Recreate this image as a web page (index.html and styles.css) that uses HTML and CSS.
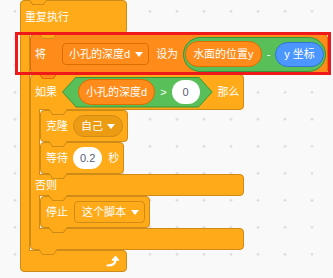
FILE: index.html
```html
<!DOCTYPE html>
<html lang="zh">
<head>
    <meta charset="UTF-8">
    <meta name="viewport" content="width=device-width, initial-scale=1.0">
    <title>重复执行</title>
    <link rel="stylesheet" href="styles.css">
</head>
<body>
<!-- Script -->
    <div class="script">
        <div class="c-block control forever">
            <div class="c-arm top tab">
                <span class="label">重复执行</span>
            </div>
            <div class="c-row">
                <div class="c-side"></div>
                <div class="c-mouth">
                    <!-- set variable -->
                    <div class="block data set tab">
                        <span class="label">将</span>
                        <span class="dropdown">
                            <span class="label">小孔的深度d</span>
                            <span class="arrow"></span>
                        </span>
                        <span class="label to">设为</span>
                        <span class="reporter operator">
                            <span class="reporter var">水面的位置y</span>
                            <span class="label minus">-</span>
                            <span class="reporter motion">y 坐标</span>
                        </span>
                    </div>

                    <!-- if / else -->
                    <div class="c-block control if-else">
                        <div class="c-arm top tab">
                            <span class="label">如果</span>
                            <span class="hex">
                                <span class="hex-in">
                                    <span class="reporter var">小孔的深度d</span>
                                    <span class="label gt">&gt;</span>
                                    <span class="number">0</span>
                                </span>
                            </span>
                            <span class="label then">那么</span>
                        </div>
                        <div class="c-row">
                            <div class="c-side"></div>
                            <div class="c-mouth">
                                <div class="block control clone tab">
                                    <span class="label">克隆</span>
                                    <span class="menu">
                                        <span class="label">自己</span>
                                        <span class="arrow"></span>
                                    </span>
                                </div>
                                <div class="block control wait tab">
                                    <span class="label">等待</span>
                                    <span class="number">0.2</span>
                                    <span class="label sec">秒</span>
                                </div>
                            </div>
                        </div>
                        <div class="c-arm mid tab">
                            <span class="label">否则</span>
                        </div>
                        <div class="c-row">
                            <div class="c-side"></div>
                            <div class="c-mouth">
                                <div class="block control stop tab">
                                    <span class="label">停止</span>
                                    <span class="dropdown">
                                        <span class="label">这个脚本</span>
                                        <span class="arrow"></span>
                                    </span>
                                </div>
                            </div>
                        </div>
                        <div class="c-arm bottom tab-outer"></div>
                    </div>
                </div>
            </div>
            <div class="c-arm bottom loop">
                <svg class="loop-icon" width="15" height="12" viewBox="0 0 15 12">
                    <path d="M1.5 10.5 C6 10.5 9.5 9.5 9.5 4.5" fill="none" stroke="#fff" stroke-width="2.2" stroke-linecap="round"/>
                    <path d="M6 5.2 L9.5 1 L13 5.2 Z" fill="#fff" stroke="#fff" stroke-width="1" stroke-linejoin="round"/>
                </svg>
            </div>
        </div>
    </div>

    <div class="highlight"></div>
</body>
</html>
```

FILE: styles.css
```css
        /* Page */
        * {
            box-sizing: border-box;
        }
        body {
            margin: 0;
            height: 278px;
            overflow: hidden;
            position: relative;
            font-family: "Liberation Sans", "Noto Sans CJK SC", sans-serif;
            font-size: 11px;
            color: #fff;
            background-color: #f9f9f9;
            background-image: radial-gradient(circle, #d8d8d8 1px, transparent 1.4px);
            background-size: 27px 27px;
            background-position: 1.5px -2.2px;
        }

        /* Colours per category */
        .control {
            --fill: #ffab19;
            --edge: #cf8b17;
        }
        .data {
            --fill: #ff8c1a;
            --edge: #db6e00;
        }

        .label {
            line-height: 1;
            white-space: nowrap;
        }

        /* Script and the notch above it */
        .script {
            position: relative;
            margin-left: 20px;
            width: fit-content;
            --fill: #ffab19;
            --edge: #cf8b17;
        }
        .script::before,
        .script::after,
        .tab::before,
        .tab::after,
        .tab-outer::before,
        .tab-outer::after {
            content: '';
            position: absolute;
            z-index: 3;
            clip-path: polygon(0 0, 100% 0, 78% 100%, 22% 100%);
        }
        .script::before {
            left: 8px;
            top: -1px;
            width: 20px;
            height: 6px;
            background: var(--edge);
        }
        .script::after {
            left: 9px;
            top: -1px;
            width: 18px;
            height: 5px;
            background: var(--fill);
        }

        /* Tab under a block */
        .tab::before,
        .tab-outer::before {
            left: var(--tx, 7px);
            top: 100%;
            width: 20px;
            height: 6px;
            background: var(--edge);
        }
        .tab::after,
        .tab-outer::after {
            left: calc(var(--tx, 7px) + 1px);
            top: 100%;
            width: 18px;
            height: 5px;
            background: var(--fill);
        }
        .c-arm.top,
        .c-arm.mid {
            --tx: 17px;
        }

        /* C blocks */
        .c-block {
            display: flex;
            flex-direction: column;
            align-items: flex-start;
        }
        .c-arm {
            position: relative;
            display: flex;
            align-items: center;
            background: var(--fill);
            border: 1px solid var(--edge);
            padding-left: 4px;
        }
        .c-arm.top {
            border-radius: 4px 4px 4px 0;
        }
        .c-arm.mid {
            height: 22px;
            border-radius: 0 4px 4px 0;
        }
        .c-arm.bottom {
            height: 22px;
            border-radius: 0 4px 4px 4px;
        }
        .c-row {
            display: flex;
        }
        .c-side {
            position: relative;
            z-index: 1;
            width: 10px;
            flex-shrink: 0;
            margin: -1px 0;
            background: var(--fill);
            border-left: 1px solid var(--edge);
            border-right: 1px solid var(--edge);
        }
        .c-mouth {
            display: flex;
            flex-direction: column;
            align-items: flex-start;
        }

        .forever .c-arm {
            width: 107px;
        }
        .forever > .c-arm.top {
            height: 34px;
        }
        .loop {
            justify-content: flex-end;
            padding-right: 5px;
        }
        .if-else .c-arm {
            width: 214px;
        }
        .if-else > .c-arm.top {
            height: 36px;
        }

        /* Stack blocks */
        .block {
            position: relative;
            display: flex;
            align-items: center;
            height: 32px;
            padding: 0 4px 0 5px;
            background: var(--fill);
            border: 1px solid var(--edge);
            border-radius: 4px;
        }
        .set {
            height: 40px;
            padding: 0 1px 0 4px;
        }

        /* Fields */
        .dropdown {
            display: flex;
            align-items: center;
            gap: 5px;
            height: 22px;
            padding: 0 5px 0 7px;
            background: var(--fill);
            border: 1px solid var(--edge);
            border-radius: 4px;
        }
        .set .dropdown {
            margin-left: 16px;
            padding-left: 6px;
        }
        .stop .dropdown {
            margin-left: 6px;
        }
        .menu {
            display: flex;
            align-items: center;
            gap: 4px;
            height: 22px;
            margin-left: 5px;
            padding: 0 7px;
            background: #ec9c13;
            border: 1px solid var(--edge);
            border-radius: 11px;
        }
        .arrow {
            width: 0;
            height: 0;
            border-left: 4px solid transparent;
            border-right: 4px solid transparent;
            border-top: 5px solid #fff;
        }
        .number {
            display: flex;
            align-items: center;
            justify-content: center;
            height: 22px;
            padding: 0 7px;
            margin-left: 5px;
            color: #575e75;
            background: #fff;
            border-radius: 11px;
            line-height: 1;
        }
        .sec {
            margin-left: 6px;
        }
        .to {
            margin-left: 7px;
        }

        /* Reporters */
        .reporter {
            display: flex;
            align-items: center;
            white-space: nowrap;
            line-height: 1;
            border: 1px solid;
        }
        .operator {
            height: 35px;
            margin-left: 5px;
            padding: 0 1px;
            background: #59c059;
            border-color: #389438;
            border-radius: 18px;
        }
        .var {
            height: 26px;
            padding: 0 7px;
            background: #ff8c1a;
            border-color: #db6e00;
            border-radius: 13px;
        }
        .motion {
            height: 25px;
            padding: 0 8px;
            background: #4c97ff;
            border-color: #3373cc;
            border-radius: 13px;
        }
        .minus {
            margin: 0 5px;
        }

        /* Boolean */
        .hex {
            display: flex;
            height: 31px;
            margin-left: 5px;
            padding: 1px;
            background: #389438;
            clip-path: polygon(14px 0, calc(100% - 14px) 0, 100% 50%, calc(100% - 14px) 100%, 14px 100%, 0 50%);
        }
        .hex-in {
            display: flex;
            align-items: center;
            padding: 0 12px 0 15px;
            background: #59c059;
            clip-path: polygon(13px 0, calc(100% - 13px) 0, 100% 50%, calc(100% - 13px) 100%, 13px 100%, 0 50%);
        }
        .hex .number {
            width: 28px;
            height: 24px;
            border-radius: 12px;
        }
        .gt {
            margin-left: 5px;
        }
        .then {
            margin-left: 5px;
        }

        /* Red frame round the set block */
        .highlight {
            position: absolute;
            left: 15px;
            top: 32px;
            width: 316px;
            height: 43px;
            border: 3px solid #f01919;
            z-index: 5;
        }
```
